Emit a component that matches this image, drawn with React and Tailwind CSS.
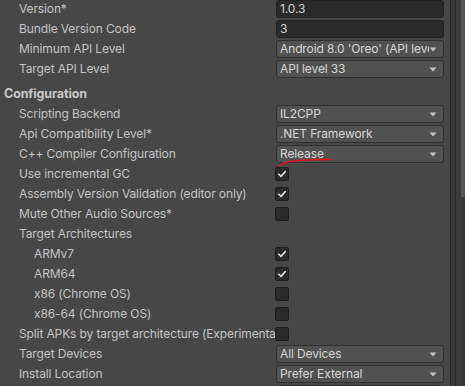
import React from "react";

const Arrow = () => (
  <svg width="8" height="5" viewBox="0 0 8 5" className="absolute right-[6px] top-[6px]">
    <path d="M0.5 0.5 L7.5 0.5 L4 4.5 Z" fill="#c2c2c2" />
  </svg>
);

const Check = ({ on }) => (
  <div className="w-[14px] h-[14px] ml-[-1px] rounded-[2px] bg-[#2a2a2a] border border-[#1d1d1d] flex items-center justify-center">
    {on && (
      <svg width="10" height="10" viewBox="0 0 10 10">
        <path d="M1.8 5.2 L4 7.4 L8.3 2.6" fill="none" stroke="#dcdcdc" strokeWidth="1.6" strokeLinecap="round" strokeLinejoin="round" />
      </svg>
    )}
  </div>
);

const Field = ({ v }) => (
  <div className="w-[168px] h-[18px] rounded-[3px] bg-[#2a2a2a] border border-[#212121] pl-[3px] flex items-center text-[#d2d2d2] whitespace-nowrap overflow-hidden leading-[16px]">
    {v}
  </div>
);

const Drop = ({ v }) => (
  <div className="relative w-[168px] h-[18px] rounded-[3px] bg-[#515151] border border-[#2f2f2f] pl-[3px] pr-[14px] flex items-center text-[#d6d6d6] whitespace-nowrap overflow-hidden leading-[16px]">
    <span className="overflow-hidden">{v}</span>
    <Arrow />
  </div>
);

const Row = ({ label, indent, children }) => (
  <div className="flex items-center h-[20px]">
    <div
      className={
        "w-[276px] pr-[2px] whitespace-nowrap overflow-hidden text-[#c4c4c4] leading-[18px] " +
        (indent ? "pl-[34px]" : "pl-[19px]")
      }
    >
      {label}
    </div>
    {children}
  </div>
);

export default function App() {
  return (
    <div className="w-[465px] h-[386px] overflow-hidden bg-[#474747] flex text-[12px] tracking-[-0.12px] font-['Inter','Liberation_Sans',sans-serif]">
      <div className="relative w-[450px] shrink-0">
        <div className="mt-[-1px]">
          <Row label="Version*"><Field v="1.0.3" /></Row>
          <Row label="Bundle Version Code"><Field v="3" /></Row>
          <Row label="Minimum API Level"><Drop v="Android 8.0 'Oreo' (API level 26)" /></Row>
          <Row label="Target API Level"><Drop v="API level 33" /></Row>
          <div className="h-[25px] flex items-end pb-[1px] pl-[4px] font-bold text-[#c8c8c8] text-[12.5px] leading-[18px]">
            Configuration
          </div>
          <Row label="Scripting Backend"><Drop v="IL2CPP" /></Row>
          <Row label="Api Compatibility Level*"><Drop v=".NET Framework" /></Row>
          <Row label="C++ Compiler Configuration"><Drop v="Release" /></Row>
          <Row label="Use incremental GC"><Check on /></Row>
          <Row label="Assembly Version Validation (editor only)"><Check on /></Row>
          <Row label="Mute Other Audio Sources*"><Check /></Row>
          <Row label="Target Architectures" />
          <Row label="ARMv7" indent><Check on /></Row>
          <Row label="ARM64" indent><Check on /></Row>
          <Row label="x86 (Chrome OS)" indent><Check /></Row>
          <Row label="x86-64 (Chrome OS)" indent><Check /></Row>
          <Row label="Split APKs by target architecture (Experimental)"><Check /></Row>
          <Row label="Target Devices"><Drop v="All Devices" /></Row>
          <Row label="Install Location"><Drop v="Prefer External" /></Row>
          <Row label="Internet Access"><Drop v="Auto" /></Row>
        </div>
        <svg className="absolute left-0 top-0 pointer-events-none" width="450" height="386">
          <path d="M279 165.5 C 284 162.5, 290 161, 296 160.8 C 302 160.2, 306 159.8, 312 159.8 L 330 159.4" fill="none" stroke="#e8141b" strokeWidth="1.6" strokeLinecap="round" />
        </svg>
      </div>
      <div className="flex-1 flex">
        <div className="w-px bg-[#232323]" />
        <div className="w-[4px] bg-[#3c3c3c]" />
        <div className="w-px bg-[#262626]" />
        <div className="w-[5px] bg-[#3c3c3c]" />
        <div className="flex-1 flex flex-col bg-[#383838]">
          <div className="h-[197px] bg-[#585858]" />
        </div>
      </div>
    </div>
  );
}
